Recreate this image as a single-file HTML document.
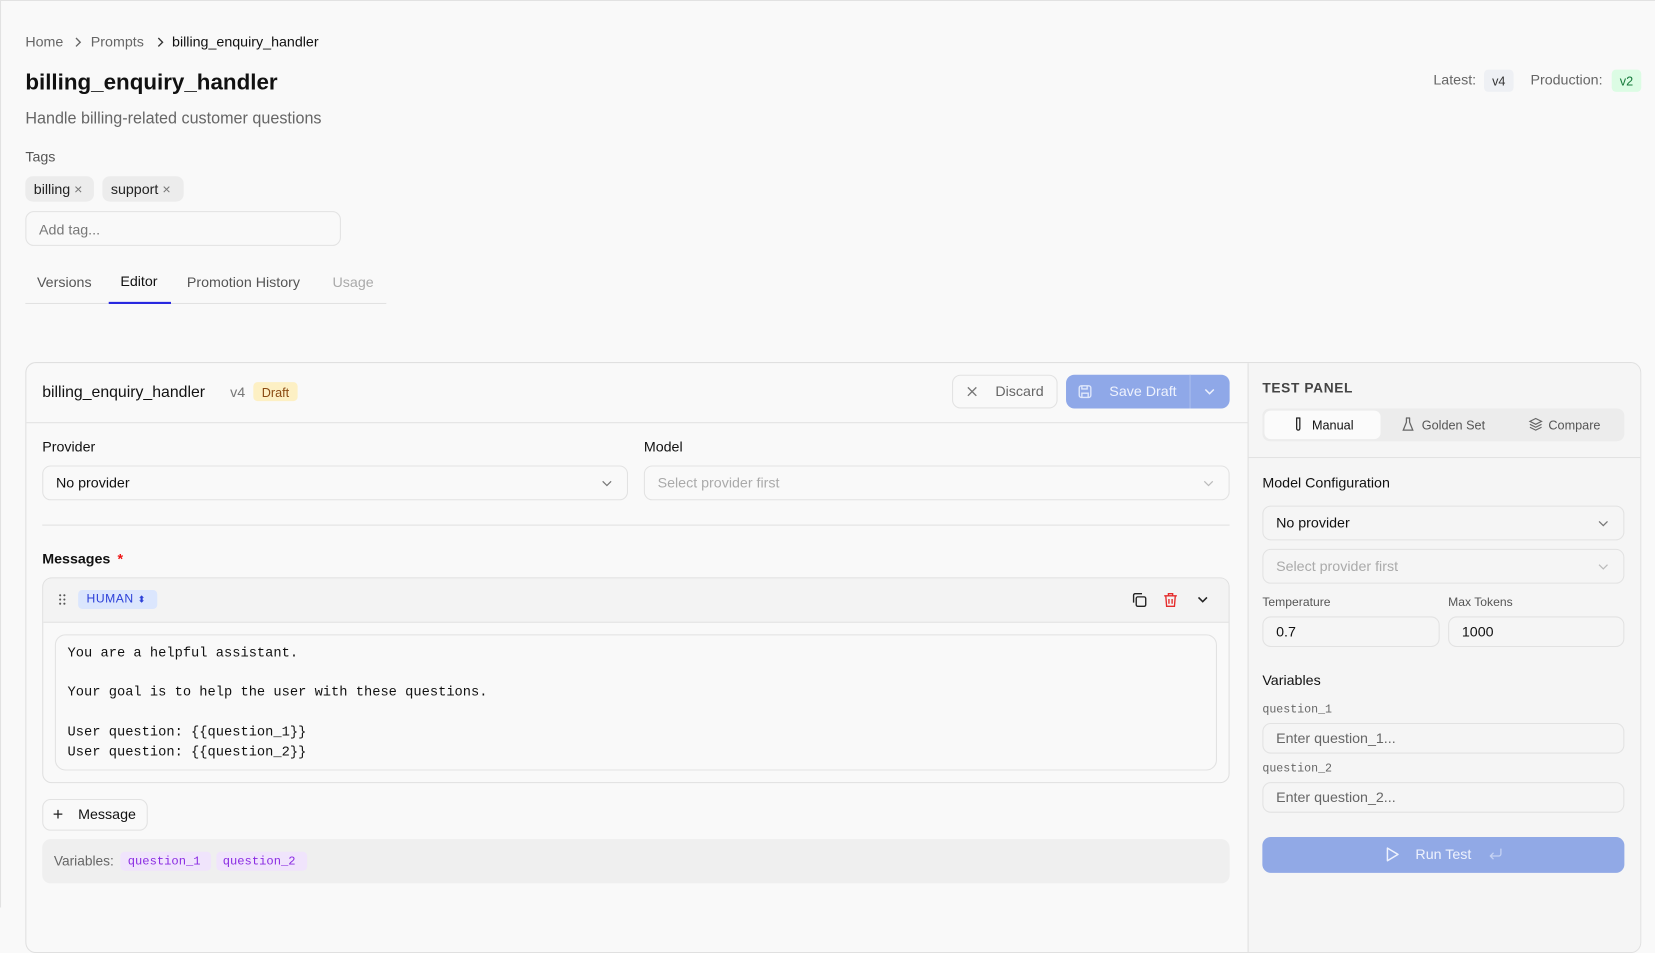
<!DOCTYPE html>
<html><head><meta charset="utf-8"><style>
*{box-sizing:border-box;margin:0;padding:0}
html,body{width:1655px;height:899px;overflow:hidden;background:#f9f9f9;font-family:"Liberation Sans",sans-serif;color:#111}
#r{position:absolute;left:0;top:0;width:1568px;height:860px;transform:scale(1.05548);transform-origin:0 0;box-shadow:inset 1px 1px 0 #e2e2e2}
.a{position:absolute;white-space:nowrap}
.box{position:absolute;border:1px solid #e2e2e2;border-radius:8px;background:#f9f9f9}
.mono{font-family:"Liberation Mono",monospace}
.sel{position:absolute;border:1px solid #e2e2e2;border-radius:8px;background:#f9f9f9;font-size:13.5px;padding-left:12px;display:flex;align-items:center}
.chev{position:absolute;right:14px;top:50%;margin-top:-4px}
</style></head><body><div id="r">
<div class="a" style="left:24px;top:32px;font-size:13.5px;color:#666">Home</div>
<svg class="a" style="left:70px;top:35px" width="8" height="10" viewBox="0 0 8 10"><path d="M2 1l4 4-4 4" fill="none" stroke="#666" stroke-width="1.3"/></svg>
<div class="a" style="left:86px;top:32px;font-size:13.5px;color:#666">Prompts</div>
<svg class="a" style="left:148px;top:35px" width="8" height="10" viewBox="0 0 8 10"><path d="M2 1l4 4-4 4" fill="none" stroke="#333" stroke-width="1.3"/></svg>
<div class="a" style="left:163px;top:32px;font-size:13.5px;color:#111">billing_enquiry_handler</div>
<div class="a" style="left:24px;top:67px;font-size:21.2px;font-weight:700;color:#111">billing_enquiry_handler</div>
<div class="a" style="left:24px;top:104px;font-size:15.3px;color:#666">Handle billing-related customer questions</div>
<div class="a" style="left:24px;top:141px;font-size:13.5px;color:#555">Tags</div>
<div class="a" style="left:24px;top:167px;width:65px;height:24px;background:#ececec;border-radius:7px;font-size:13.5px;padding:5px 0 0 8px;color:#222">billing <span style="color:#777">×</span></div>
<div class="a" style="left:97px;top:167px;width:77px;height:24px;background:#ececec;border-radius:7px;font-size:13.5px;padding:5px 0 0 8px;color:#222">support <span style="color:#777">×</span></div>
<div class="box" style="left:24px;top:200px;width:299px;height:33px;font-size:13.5px;color:#777;padding:9px 0 0 12px">Add tag...</div>
<div class="a" style="left:35px;top:260px;font-size:13.5px;color:#555">Versions</div>
<div class="a" style="left:114px;top:259px;font-size:13.5px;color:#111">Editor</div>
<div class="a" style="left:177px;top:260px;font-size:13.5px;color:#555">Promotion History</div>
<div class="a" style="left:315px;top:260px;font-size:13.5px;color:#aaa">Usage</div>
<div class="a" style="left:24px;top:287px;width:342px;height:1px;background:#e2e2e2"></div>
<div class="a" style="left:103px;top:286px;width:59px;height:2px;background:#2727e0"></div>
<div class="a" style="left:1358px;top:68px;font-size:13.5px;color:#666">Latest:</div>
<div class="a" style="left:1406px;top:66px;width:28px;height:21px;background:#eef0f4;border-radius:4px;font-size:12px;color:#333;text-align:center;padding-top:4px">v4</div>
<div class="a" style="left:1450px;top:68px;font-size:13.5px;color:#666">Production:</div>
<div class="a" style="left:1527px;top:66px;width:28px;height:21px;background:#dcfce4;border-radius:4px;font-size:12px;color:#167a3a;text-align:center;padding-top:4px">v2</div>
<div class="a" style="left:24px;top:343px;width:1531px;height:560px;border:1px solid #e0e0e0;border-radius:10px;background:#f9f9f9;overflow:hidden">
  <div class="a" style="left:1157px;top:0;width:376px;height:560px;background:#f5f5f5;border-left:1px solid #e0e0e0"></div>
  <div class="a" style="left:0;top:56px;width:1157px;height:1px;background:#e2e2e2"></div>
  <div class="a" style="left:1157px;top:89px;width:376px;height:1px;background:#e2e2e2"></div>
</div>
<div class="a" style="left:40px;top:363px;font-size:15px;color:#111">billing_enquiry_handler</div>
<div class="a" style="left:218px;top:364px;font-size:13.5px;color:#777">v4</div>
<div class="a" style="left:240px;top:362px;width:42px;height:18px;background:#fdf0c4;border-radius:4px;font-size:12px;color:#8a4a12;text-align:center;padding-top:3px">Draft</div>
<div class="box" style="left:902px;top:355px;width:100px;height:32px"></div>
<svg class="a" style="left:915px;top:365px" width="12" height="12" viewBox="0 0 12 12"><path d="M2 2l8 8M10 2l-8 8" stroke="#777" stroke-width="1.3"/></svg>
<div class="a" style="left:943px;top:363px;font-size:13.5px;color:#666">Discard</div>
<div class="a" style="left:1010px;top:355px;width:155px;height:32px;background:#8fa8e8;border-radius:8px"></div>
<div class="a" style="left:1127px;top:355px;width:1px;height:32px;background:#a9bdee"></div>
<svg class="a" style="left:1021px;top:364px" width="14" height="14" viewBox="0 0 14 14"><rect x="1.5" y="1.5" width="11" height="11" rx="2" fill="none" stroke="#dfe7fb" stroke-width="1.3"/><path d="M4 1.5v3h5v-3M4 12.5v-4h6v4" fill="none" stroke="#dfe7fb" stroke-width="1.3"/></svg>
<div class="a" style="left:1051px;top:363px;font-size:13.5px;color:#eef2fd">Save Draft</div>
<svg class="a" style="left:1141px;top:367px" width="10" height="8" viewBox="0 0 10 8"><path d="M1 2l4 4 4-4" fill="none" stroke="#eef2fd" stroke-width="1.4"/></svg>
<div class="a" style="left:40px;top:416px;font-size:13.5px">Provider</div>
<div class="sel" style="left:40px;top:441px;width:555px;height:33px">No provider<svg class="chev" width="10" height="8" viewBox="0 0 10 8"><path d="M1 2l4 4 4-4" fill="none" stroke="#777" stroke-width="1.2"/></svg></div>
<div class="a" style="left:610px;top:416px;font-size:13.5px">Model</div>
<div class="sel" style="left:610px;top:441px;width:555px;height:33px;color:#aaa">Select provider first<svg class="chev" width="10" height="8" viewBox="0 0 10 8"><path d="M1 2l4 4 4-4" fill="none" stroke="#bbb" stroke-width="1.2"/></svg></div>
<div class="a" style="left:40px;top:497px;width:1125px;height:1px;background:#e2e2e2"></div>
<div class="a" style="left:40px;top:522px;font-size:13.5px;font-weight:700">Messages <span style="color:#e11;margin-left:3px">*</span></div>
<div class="a" style="left:40px;top:547px;width:1125px;height:195px;border:1px solid #e0e0e0;border-radius:9px;background:#f9f9f9;overflow:hidden">
  <div style="height:42px;background:#f3f3f3;border-bottom:1px solid #e2e2e2"></div>
</div>
<svg class="a" style="left:55px;top:562px" width="8" height="12" viewBox="0 0 8 12"><g fill="#555"><circle cx="2" cy="2" r="1"/><circle cx="6" cy="2" r="1"/><circle cx="2" cy="6" r="1"/><circle cx="6" cy="6" r="1"/><circle cx="2" cy="10" r="1"/><circle cx="6" cy="10" r="1"/></g></svg>
<div class="a" style="left:74px;top:559px;width:75px;height:18px;background:#dbe6fd;border-radius:4px;font-size:11.5px;color:#2b3fd8;padding:3px 0 0 8px;letter-spacing:.5px">HUMAN <span style="font-size:9px">⬍</span></div>
<svg class="a" style="left:1072px;top:561px" width="15" height="15" viewBox="0 0 15 15"><rect x="4.5" y="4.5" width="9" height="9" rx="1.5" fill="none" stroke="#222" stroke-width="1.3"/><path d="M2 10V3a1.5 1.5 0 0 1 1.5-1.5H10" fill="none" stroke="#222" stroke-width="1.3"/></svg>
<svg class="a" style="left:1102px;top:561px" width="14" height="15" viewBox="0 0 14 15"><path d="M1 3.5h12M5 3.5V1.5h4v2M2.5 3.5l.8 10h7.4l.8-10M5.5 6.5v4.5M8.5 6.5v4.5" fill="none" stroke="#e52b2b" stroke-width="1.3"/></svg>
<svg class="a" style="left:1134px;top:564px" width="11" height="8" viewBox="0 0 11 8"><path d="M1.5 2l4 4 4-4" fill="none" stroke="#222" stroke-width="1.5"/></svg>
<div class="box" style="left:52px;top:601px;width:1101px;height:129px;border-radius:10px"></div>
<div class="a mono" style="left:64px;top:610px;font-size:13px;line-height:18.7px;color:#111;white-space:pre">You are a helpful assistant.

Your goal is to help the user with these questions.

User question: {{question_1}}
User question: {{question_2}}</div>
<div class="box" style="left:40px;top:757px;width:100px;height:30px"></div>
<div class="a" style="left:50px;top:762px;font-size:17px;color:#222">+</div>
<div class="a" style="left:74px;top:764px;font-size:13.5px">Message</div>
<div class="a" style="left:40px;top:795px;width:1125px;height:42px;background:#efefef;border-radius:8px"></div>
<div class="a" style="left:51px;top:808px;font-size:13px;color:#666">Variables:</div>
<div class="a mono" style="left:114px;top:807px;width:86px;height:18px;background:#f0e4fc;border-radius:4px;font-size:11.5px;color:#8a2be2;padding:3px 0 0 7px">question_1</div>
<div class="a mono" style="left:205px;top:807px;width:86px;height:18px;background:#f0e4fc;border-radius:4px;font-size:11.5px;color:#8a2be2;padding:3px 0 0 6px">question_2</div>
<div class="a" style="left:1196px;top:360px;font-size:13px;font-weight:700;color:#444;letter-spacing:.6px">TEST PANEL</div>
<div class="a" style="left:1196px;top:387px;width:343px;height:31px;background:#ececec;border-radius:7px"></div>
<div class="a" style="left:1198px;top:389px;width:110px;height:27px;background:#fbfbfb;border-radius:6px"></div>
<svg class="a" style="left:1225px;top:395px" width="10" height="14" viewBox="0 0 10 14"><path d="M3 1h4M3.5 1v10a1.5 1.5 0 0 0 3 0V1" fill="none" stroke="#222" stroke-width="1.2"/></svg>
<div class="a" style="left:1243px;top:396px;font-size:12px;color:#111">Manual</div>
<svg class="a" style="left:1328px;top:395px" width="12" height="14" viewBox="0 0 12 14"><path d="M4 1h4M4.5 1v4L1.5 12.5h9L7.5 5V1" fill="none" stroke="#666" stroke-width="1.2"/></svg>
<div class="a" style="left:1347px;top:396px;font-size:12px;color:#555">Golden Set</div>
<svg class="a" style="left:1448px;top:395px" width="14" height="14" viewBox="0 0 14 14"><path d="M7 1.5l5.5 2.7L7 7 1.5 4.2zM1.5 7L7 9.8 12.5 7M1.5 9.8L7 12.5l5.5-2.7" fill="none" stroke="#666" stroke-width="1.1"/></svg>
<div class="a" style="left:1467px;top:396px;font-size:12px;color:#555">Compare</div>
<div class="a" style="left:1196px;top:450px;font-size:13.5px;color:#111">Model Configuration</div>
<div class="sel" style="left:1196px;top:479px;width:343px;height:33px;background:#f5f5f5">No provider<svg class="chev" width="10" height="8" viewBox="0 0 10 8"><path d="M1 2l4 4 4-4" fill="none" stroke="#777" stroke-width="1.2"/></svg></div>
<div class="sel" style="left:1196px;top:520px;width:343px;height:33px;background:#f5f5f5;color:#aaa">Select provider first<svg class="chev" width="10" height="8" viewBox="0 0 10 8"><path d="M1 2l4 4 4-4" fill="none" stroke="#bbb" stroke-width="1.2"/></svg></div>
<div class="a" style="left:1196px;top:565px;font-size:11.5px;color:#555">Temperature</div>
<div class="a" style="left:1372px;top:565px;font-size:11.5px;color:#555">Max Tokens</div>
<div class="sel" style="left:1196px;top:584px;width:168px;height:29px;background:#f5f5f5">0.7</div>
<div class="sel" style="left:1372px;top:584px;width:167px;height:29px;background:#f5f5f5">1000</div>
<div class="a" style="left:1196px;top:637px;font-size:13.5px">Variables</div>
<div class="a mono" style="left:1196px;top:667px;font-size:11px;color:#666">question_1</div>
<div class="sel" style="left:1196px;top:685px;width:343px;height:29px;background:#f5f5f5;color:#666">Enter question_1...</div>
<div class="a mono" style="left:1196px;top:723px;font-size:11px;color:#666">question_2</div>
<div class="sel" style="left:1196px;top:741px;width:343px;height:29px;background:#f5f5f5;color:#666">Enter question_2...</div>
<div class="a" style="left:1196px;top:793px;width:343px;height:34px;background:#91a9e6;border-radius:8px"></div>
<svg class="a" style="left:1312px;top:802px" width="14" height="15" viewBox="0 0 14 15"><path d="M2.5 1.5v12l10-6z" fill="none" stroke="#eef2fd" stroke-width="1.4" stroke-linejoin="round"/></svg>
<div class="a" style="left:1341px;top:802px;font-size:13.5px;color:#eef2fd">Run Test</div>
<svg class="a" style="left:1410px;top:803px" width="14" height="13" viewBox="0 0 14 13"><path d="M12 1v5a2 2 0 0 1-2 2H2M5 5L2 8l3 3" fill="none" stroke="#c6d3f4" stroke-width="1.2"/></svg>
</div></body></html>
